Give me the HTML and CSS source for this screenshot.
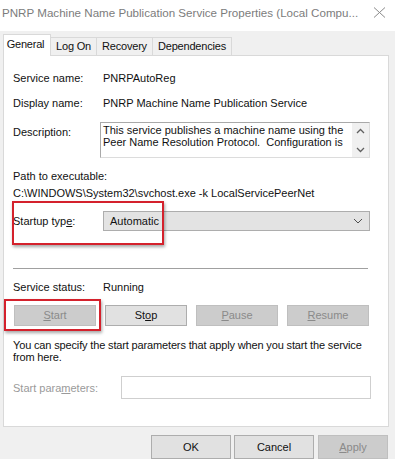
FILE: index.html
```html
<!DOCTYPE html>
<html lang="en">
<head>
  <meta charset="UTF-8">
  <title>PNRP Machine Name Publication Service Properties</title>
  <link rel="stylesheet" href="styles.css">
</head>
<body>
  <div class="window">
    <div class="title-bar">
      <span class="title">PNRP Machine Name Publication Service Properties (Local Compu...</span>
      <svg class="close" width="13" height="11" viewBox="0 0 13 11">
        <path d="M1 0.5 L12 10.5 M12 0.5 L1 10.5" stroke="#8a8a8a" stroke-width="1" fill="none"/>
      </svg>
    </div>

    <div class="tabs">
      <div class="tab active tab-general">General</div>
      <div class="tab tab-logon">Log On</div>
      <div class="tab tab-recovery">Recovery</div>
      <div class="tab tab-deps">Dependencies</div>
    </div>

    <div class="panel">
      <div class="row first">
        <span class="label">Service name:</span>
        <span>PNRPAutoReg</span>
      </div>
      <div class="row">
        <span class="label">Display name:</span>
        <span>PNRP Machine Name Publication Service</span>
      </div>
      <div class="row desc-row">
        <span class="label">Description:</span>
        <div class="desc-box">
          <div class="desc-text">This service publishes a machine name using the Peer Name Resolution Protocol.&nbsp; Configuration is</div>
          <div class="scroll">
            <svg width="9" height="6" viewBox="0 0 9 6"><path d="M1 5 L4.5 1.5 L8 5" stroke="#606060" stroke-width="1.3" fill="none"/></svg>
            <svg width="9" height="6" viewBox="0 0 9 6"><path d="M1 1 L4.5 4.5 L8 1" stroke="#606060" stroke-width="1.3" fill="none"/></svg>
          </div>
        </div>
      </div>

      <div class="path">
        <div>Path to executable:</div>
        <div>C:\WINDOWS\System32\svchost.exe -k LocalServicePeerNet</div>
      </div>

      <div class="row combo-row">
        <span class="label">Startup typ<u>e</u>:</span>
        <div class="combo">
          <span>Automatic</span>
          <svg width="10" height="6" viewBox="0 0 10 6"><path d="M1 1 L5 5 L9 1" stroke="#505050" stroke-width="1" fill="none"/></svg>
        </div>
      </div>

      <div class="separator"></div>

      <div class="row status-row">
        <span class="label">Service status:</span>
        <span>Running</span>
      </div>

      <div class="buttons">
        <div class="btn disabled"><u>S</u>tart</div>
        <div class="btn">St<u>o</u>p</div>
        <div class="btn disabled"><u>P</u>ause</div>
        <div class="btn disabled"><u>R</u>esume</div>
      </div>

      <p class="hint">You can specify the start parameters that apply when you start the service from here.</p>

      <div class="row params-row">
        <span class="label params-label">Start para<u>m</u>eters:</span>
        <div class="params-input"></div>
      </div>
    </div>

    <div class="footer">
      <div class="btn dlg">OK</div>
      <div class="btn dlg">Cancel</div>
      <div class="btn dlg apply disabled"><u>A</u>pply</div>
    </div>

    <div class="mark mark-startup"></div>
    <div class="mark mark-start"></div>
  </div>
</body>
</html>
```

FILE: styles.css
```css
/* Base */
body {
  margin: 0;
  font-family: "Liberation Sans", Arial, sans-serif;
  font-size: 11px;
  color: #111;
}

.window {
  position: relative;
  width: 395px;
  height: 459px;
  overflow: hidden;
  background: #f0f0f0;
}

u {
  text-decoration: underline;
  text-underline-offset: 1px;
}

/* Title bar */
.title-bar {
  display: flex;
  align-items: center;
  justify-content: space-between;
  height: 31px;
  padding: 0 9px 0 2px;
  background: #fff;
  box-sizing: border-box;
}

.title {
  font-size: 11.6px;
  color: #7c7c7c;
  white-space: nowrap;
  margin-top: -6px;
}

.close {
  margin-top: -6px;
}

/* Tabs */
.tabs {
  display: flex;
  align-items: flex-end;
  height: 24px;
  padding-left: 3px;
}

.tab {
  height: 18px;
  line-height: 17px;
  text-align: center;
  border: 1px solid #d9d9d9;
  border-bottom: none;
  margin-left: -1px;
  box-sizing: border-box;
  background: #f0f0f0;
  letter-spacing: -0.2px;
}

.tab-general { width: 48px; margin-left: 0; }
.tab-logon { width: 47px; }
.tab-recovery { width: 57px; }
.tab-deps { width: 80px; }

.tab.active {
  position: relative;
  z-index: 1;
  height: 22px;
  line-height: 19px;
  margin-bottom: -1px;
  padding-right: 3px;
  background: #fff;
}

/* Tab page */
.panel {
  margin-left: 3px;
  width: 386px;
  height: 372px;
  border: 1px solid #d9d9d9;
  background: #fff;
  box-sizing: border-box;
  padding: 0 18px 0 9px;
}

.row {
  display: flex;
  align-items: center;
  line-height: 14px;
  margin-top: 11px;
}

.row.first {
  margin-top: 15px;
}

.label {
  width: 90px;
  flex-shrink: 0;
}

.desc-row {
  align-items: flex-start;
  margin-top: 12px;
}

.desc-row .label {
  margin-top: 3px;
  width: 87px;
}

.desc-box {
  display: flex;
  flex: 1;
  height: 36px;
  border: 1px solid #a9a9a9;
  border-right-color: #dcdcdc;
  border-bottom-color: #dcdcdc;
  box-sizing: border-box;
}

.desc-text {
  flex: 1;
  padding: 1px 0 0 2px;
  line-height: 12px;
}

.scroll {
  display: flex;
  flex-direction: column;
  justify-content: space-between;
  align-items: center;
  width: 17px;
  padding: 5px 0 4px;
  background: #f0f0f0;
}

.path {
  margin-top: 10px;
  line-height: 17px;
}

.combo-row {
  margin-top: 9px;
}

.combo {
  display: flex;
  align-items: center;
  justify-content: space-between;
  flex: 1;
  height: 20px;
  padding: 0 6px 0 6px;
  background: #e3e3e3;
  border: 1px solid #adadad;
  box-sizing: border-box;
}

.separator {
  height: 1px;
  background: #a0a0a0;
  margin-top: 37px;
  margin-right: 2px;
}

.status-row {
  margin-top: 11px;
}

/* Buttons */
.buttons {
  display: flex;
  justify-content: space-between;
  margin: 11px 1px 0 1px;
}

.btn {
  width: 82px;
  height: 21px;
  line-height: 19px;
  text-align: center;
  background: #e1e1e1;
  border: 1px solid #adadad;
  box-sizing: border-box;
}

.btn.disabled {
  background: #cccccc;
  border-color: #bfbfbf;
  color: #8a8a8a;
}

.hint {
  margin: 13px -4px 0 0;
  line-height: 12px;
  letter-spacing: -0.15px;
}

.params-row {
  margin-top: 13px;
}

.params-label {
  width: 108px;
  color: #9a9a9a;
}

.params-input {
  flex: 1;
  height: 23px;
  border: 1px solid #cfcfcf;
  box-sizing: border-box;
  margin-right: -1px;
}

/* Dialog buttons */
.footer {
  display: flex;
  justify-content: flex-end;
  gap: 3px;
  padding: 8px 7px 0 0;
}

.btn.dlg {
  width: 80px;
  height: 24px;
  line-height: 22px;
}

.btn.apply {
  width: 70px;
  margin-left: 1px;
}

/* Red annotation boxes */
.mark {
  position: absolute;
  border: 2px solid #d4212c;
  box-shadow: 1px 2px 3px rgba(0, 0, 0, 0.35);
}

.mark-startup {
  left: 12px;
  top: 201px;
  width: 148px;
  height: 40px;
}

.mark-start {
  left: 4px;
  top: 299px;
  width: 93px;
  height: 28px;
}
```
